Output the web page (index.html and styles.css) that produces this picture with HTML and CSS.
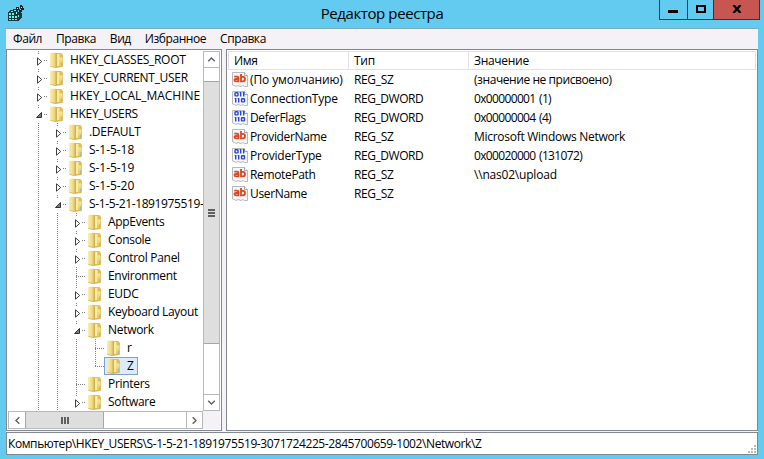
FILE: index.html
```html
<!DOCTYPE html>
<html lang="ru">
<head>
<meta charset="utf-8">
<title>Редактор реестра</title>
<link rel="stylesheet" href="styles.css">
</head>
<body>
<svg class="defs" aria-hidden="true">
  <defs>
    <linearGradient id="gold" x1="0" x2="1" y1="0" y2="0">
      <stop offset="0" stop-color="#faeeb4"/><stop offset=".6" stop-color="#f0da86"/><stop offset="1" stop-color="#dcbc58"/>
    </linearGradient>
    <linearGradient id="gold2" x1="0" x2="0" y1="0" y2="1">
      <stop offset="0" stop-color="#f7e69c"/><stop offset="1" stop-color="#e3c258"/>
    </linearGradient>
    <symbol id="folder" viewBox="0 0 16 16">
      <path d="M6 1h5.500l.5 1 1 1v11.500l-1 .5H6z" fill="#dfbf5c"/>
      <path d="M7 2h2.500v12H7z" fill="#f8eaa8"/>
      <path d="M9 5.500h3.500v9L10 15H9z" fill="url(#gold2)"/>
      <path d="M0 1.500L1 .8h5l.5.700V15L5.500 16 0 14.500z" fill="url(#gold)"/>
      <path d="M6.300 1.500v14" stroke="#cfab45" stroke-width=".8"/>
      <path d="M.3 14.300l5.200 1.300 6.500-1" fill="none" stroke="#d0ac48" stroke-width=".7"/>
      <path d="M11.700 10.500v3" stroke="#6dbbdc" stroke-width=".9"/>
    </symbol>
    <symbol id="page" viewBox="0 0 16 16">
      <path d="M.5 1.500h12l3 3v11h-3l-1.500-1-2 1-3-1-2 1-1.500-1-2-.5z" fill="#f6f6f8" stroke="#b0b0b6" stroke-width=".9"/>
      <path d="M12.500 1.500v3h3" fill="#fff" stroke="#9a9aa2" stroke-width=".9"/>
    </symbol>
    <symbol id="sz" viewBox="0 0 16 16">
      <use href="#page"/>
      <g fill="none" stroke="#d9481f" stroke-width="1.800"><path d="M2.300 5.700h2.700q1.400 0 1.400 1.300V11.300M6.400 8H4Q2.500 8 2.500 9.200T4 10.400h2.400M9 3v7.400h2q2 0 2-2.300T11 5.800H9"/></g>
    </symbol>
    <symbol id="dword" viewBox="0 0 16 16">
      <use href="#page"/>
      <path fill="none" stroke="#2546d8" stroke-width="1.400" d="M3.700 2.700h1.600q.7 0 .7.700v1.800q0 .7-.7.700H3.700Q3 5.900 3 5.200V3.400q0-.7.7-.7zM8.700 2v4.600M11.700 2v4.600M3.700 8v4.600M6.700 8v4.600M10.200 8.700h1.600q.7 0 .7.700v1.800q0 .7-.7.700h-1.600q-.7 0-.7-.7V9.400q0-.7.7-.7z"/>
      <path fill="none" stroke="#2546d8" stroke-width=".8" d="M7.500 2.500h1M10.600 2.500h1M2.600 8.500h1M5.600 8.500h1"/>
    </symbol>
    <symbol id="tri" viewBox="0 0 7 9"><path d="M1.500 .8v7.400L5.700 4.500z" fill="#fff" stroke="#404040"/></symbol>
    <symbol id="open" viewBox="0 0 7 9"><path d="M5.500 1.500v5h-5z" fill="#808080" stroke="#303030"/></symbol>
  </defs>
</svg>
<div class="window">
  <header class="titlebar">
    <svg class="appicon" viewBox="0 0 16 16" shape-rendering="crispEdges">
      <path d="M0 7h1V6h1V5h3V4h3v1h2v2h3v1h1v5h-1v1h-1v1h-1v1H0z" fill="#163a3c"/>
      <path d="M1 8h2v2H1zM4 8h2v2H4zM1 11h2v2H1zM4 11h2v2H4zM1 14h2v1H1zM4 14h2v1H4zM7 11h2v2H7zM7 14h2v1H7zM3 6h2v1H3zM6 5h2v1H6zM10 10h1v2h-1z" fill="#6ff0ea"/>
      <path d="M8 2h3v3H8zM12 0h2v1h1v2h1v2h-2v2h-3V4h1z" fill="#222"/>
      <path d="M9 3h1v1H9zM13 2h1v1h-1zM12 4h1v1h-1zM8 7h1v2H8z" fill="#aef"/>
    </svg>
    <h1>Редактор реестра</h1>
    <div class="controls">
      <button class="min" aria-label="Свернуть"><i></i></button>
      <button class="max" aria-label="Развернуть"><i></i></button>
      <button class="close" aria-label="Закрыть"><svg viewBox="0 0 10 8"><path d="M1.500 0l7 8M8.500 0l-7 8" stroke="#000" stroke-width="2.300"/></svg></button>
    </div>
  </header>
  <div class="client">
    <nav class="menu"><span>Файл</span><span>Правка</span><span>Вид</span><span>Избранное</span><span>Справка</span></nav>
    <div class="panes">
      <section class="treepane">
        <div class="treerow">
          <ul class="tree">
            <li><b class="node"><svg><use href="#tri"/></svg></b><svg class="f"><use href="#folder"/></svg><span>HKEY_CLASSES_ROOT</span></li>
            <li><b class="node"><svg><use href="#tri"/></svg></b><svg class="f"><use href="#folder"/></svg><span>HKEY_CURRENT_USER</span></li>
            <li><b class="node"><svg><use href="#tri"/></svg></b><svg class="f"><use href="#folder"/></svg><span class="loose">HKEY_LOCAL_MACHINE</span></li>
            <li><b class="node"><svg><use href="#open"/></svg></b><svg class="f"><use href="#folder"/></svg><span>HKEY_USERS</span></li>
            <li><b class="line"></b><b class="node"><svg><use href="#tri"/></svg></b><svg class="f"><use href="#folder"/></svg><span>.DEFAULT</span></li>
            <li><b class="line"></b><b class="node"><svg><use href="#tri"/></svg></b><svg class="f"><use href="#folder"/></svg><span class="loose">S-1-5-18</span></li>
            <li><b class="line"></b><b class="node"><svg><use href="#tri"/></svg></b><svg class="f"><use href="#folder"/></svg><span class="loose">S-1-5-19</span></li>
            <li><b class="line"></b><b class="node"><svg><use href="#tri"/></svg></b><svg class="f"><use href="#folder"/></svg><span class="loose">S-1-5-20</span></li>
            <li><b class="line"></b><b class="node"><svg><use href="#open"/></svg></b><svg class="f"><use href="#folder"/></svg><span class="sid">S-1-5-21-1891975519-</span></li>
            <li><b class="line"></b><b class="line"></b><b class="node"><svg><use href="#tri"/></svg></b><svg class="f"><use href="#folder"/></svg><span>AppEvents</span></li>
            <li><b class="line"></b><b class="line"></b><b class="node"><svg><use href="#tri"/></svg></b><svg class="f"><use href="#folder"/></svg><span>Console</span></li>
            <li><b class="line"></b><b class="line"></b><b class="node"><svg><use href="#tri"/></svg></b><svg class="f"><use href="#folder"/></svg><span>Control Panel</span></li>
            <li><b class="line"></b><b class="line"></b><b class="node leaf"></b><svg class="f"><use href="#folder"/></svg><span>Environment</span></li>
            <li><b class="line"></b><b class="line"></b><b class="node"><svg><use href="#tri"/></svg></b><svg class="f"><use href="#folder"/></svg><span>EUDC</span></li>
            <li><b class="line"></b><b class="line"></b><b class="node"><svg><use href="#tri"/></svg></b><svg class="f"><use href="#folder"/></svg><span>Keyboard Layout</span></li>
            <li><b class="line"></b><b class="line"></b><b class="node"><svg><use href="#open"/></svg></b><svg class="f"><use href="#folder"/></svg><span>Network</span></li>
            <li><b class="line"></b><b class="line"></b><b class="line"></b><b class="node leaf"></b><svg class="f"><use href="#folder"/></svg><span>r</span></li>
            <li><b class="line"></b><b class="line"></b><b class="line"></b><b class="node leaf last"></b><em class="selected"><svg class="f"><use href="#folder"/></svg><span>Z</span></em></li>
            <li><b class="line"></b><b class="line"></b><b class="node leaf"></b><svg class="f"><use href="#folder"/></svg><span>Printers</span></li>
            <li><b class="line"></b><b class="line"></b><b class="node"><svg><use href="#tri"/></svg></b><svg class="f"><use href="#folder"/></svg><span>Software</span></li>
          </ul>
          <div class="vscroll">
            <div class="arrow"><svg viewBox="0 0 9 9"><path d="M1.200 6.300l3.300-3.300 3.300 3.300" /></svg></div>
            <div class="vthumb"><i></i><i></i><i></i></div>
            <div class="arrow down"><svg viewBox="0 0 9 9"><path d="M1.200 2.700l3.300 3.300 3.300-3.300" /></svg></div>
          </div>
        </div>
        <div class="hrow">
          <div class="hscroll">
            <div class="arrow"><svg viewBox="0 0 9 9"><path d="M6.300 1.200L3 4.500l3.300 3.300" /></svg></div>
            <div class="hthumb"><i></i><i></i><i></i></div>
            <div class="arrow right"><svg viewBox="0 0 9 9"><path d="M2.700 1.200L6 4.500 2.700 7.800" /></svg></div>
          </div>
        </div>
      </section>
      <section class="list">
        <div class="head"><span>Имя</span><span>Тип</span><span>Значение</span></div>
        <div class="row"><svg><use href="#sz"/></svg><span class="wide">(По умолчанию)</span><span>REG_SZ</span><span class="none">(значение не присвоено)</span></div>
        <div class="row"><svg><use href="#dword"/></svg><span class="mid">ConnectionType</span><span class="dw">REG_DWORD</span><span class="num">0x00000001 (1)</span></div>
        <div class="row"><svg><use href="#dword"/></svg><span>DeferFlags</span><span class="dw">REG_DWORD</span><span class="num">0x00000004 (4)</span></div>
        <div class="row"><svg><use href="#sz"/></svg><span>ProviderName</span><span>REG_SZ</span><span class="text">Microsoft Windows Network</span></div>
        <div class="row"><svg><use href="#dword"/></svg><span class="mid">ProviderType</span><span class="dw">REG_DWORD</span><span class="num">0x00020000 (131072)</span></div>
        <div class="row"><svg><use href="#sz"/></svg><span>RemotePath</span><span>REG_SZ</span><span class="mid">\\nas02\upload</span></div>
        <div class="row"><svg><use href="#sz"/></svg><span>UserName</span><span>REG_SZ</span><span></span></div>
      </section>
    </div>
    <footer class="status"><span>Компьютер\HKEY_USERS\S-1-5-21-1891975519-3071724225-2845700659-1002\Network\Z</span>
      <svg class="grip" viewBox="0 0 8 8"><path d="M6 0h2v2H6zM6 3h2v2H6zM3 3h2v2H3zM0 6h2v2H0zM3 6h2v2H3zM6 6h2v2H6z" fill="#bcbcbc"/></svg>
    </footer>
  </div>
</div>
</body>
</html>
```
FILE: styles.css
```css
* { box-sizing: border-box; }
body {
  margin: 0;
  font: 12px/18px "Open Sans", "Noto Sans", sans-serif;
  letter-spacing: -.3px;
  color: #000;
}
.defs { position: absolute; width: 0; height: 0; }
.window {
  width: 764px;
  height: 459px;
  background: #63cbf0;
  padding: 0 6px 5px;
  display: flex;
  flex-direction: column;
  overflow: hidden;
}
.titlebar { height: 28px; display: flex; align-items: flex-start; flex: none; }
.appicon { width: 16px; height: 16px; margin: 5px 0 0 2px; }
h1 {
  flex: 1;
  margin: 2px 0 0 81px;
  font-size: 15px;
  line-height: 22px;
  font-weight: 400;
  text-align: center;
  letter-spacing: -.4px;
}
.controls { display: flex; height: 20px; width: 101px; margin-right: -2px; border: 1px solid #1d3c47; border-top: 0; }
.controls button { display: flex; align-items: flex-start; height: 19px; border: 0; padding: 0; background: none; border-right: 1px solid #1d3c47; }
.controls .min { width: 28px; padding: 10px 0 0 8px; }
.min i { width: 10px; height: 3px; background: #000; }
.controls .max { width: 26px; padding: 5px 0 0 8px; }
.max i { width: 10px; height: 8px; border: 2px solid #000; }
.controls .close { flex: 1; border-right: 0; background: #c75650; justify-content: center; padding-top: 5px; }
.close svg { width: 10px; height: 8px; }
.client { flex: 1; background: #f5f2f7; border-top: 1px solid #7fa9ba; display: flex; flex-direction: column; }
.menu { height: 20px; display: flex; gap: 13.9px; padding-left: 7px; line-height: 20px; letter-spacing: -.42px; }
.panes { height: 382px; display: flex; gap: 4px; }
.treepane, .list { border: 1px solid #828790; background: #fff; }
.treepane { width: 216px; padding: 1px; }
.treerow { display: flex; height: 360px; }
.tree { flex: 1; list-style: none; margin: 0; padding: 0 0 0 21px; overflow: hidden; white-space: nowrap; }
.tree li { height: 18px; display: flex; }
.tree .f { width: 16px; height: 16px; margin: 1px 0 0 2px; flex: none; }
.tree span { padding-left: 4px; }
.tree .loose { letter-spacing: -.05px; }
.tree .sid { letter-spacing: -.37px; }
b { flex: none; width: 19px; height: 18px; }
.line, .node { background: repeating-linear-gradient(#808080 0 1px, transparent 1px 2px) 9px 0 / 1px 18px no-repeat; }
.node {
  background-image: repeating-linear-gradient(#808080 0 1px, transparent 1px 2px), repeating-linear-gradient(90deg, #808080 0 1px, transparent 1px 2px);
  background-position: 9px 0, 9px 9px;
  background-size: 1px 18px, 10px 1px;
  background-repeat: no-repeat;
}
.node.last { background-size: 1px 10px, 10px 1px; }
.node svg { display: block; width: 9px; height: 13px; margin: 4px 0 0 6px; padding: 2px 1px; background: #fff; }
.selected { display: flex; width: 34px; margin-left: -1px; padding-left: 1px; font-style: normal; background: #dcebfd; box-shadow: inset 0 0 0 1px #7da2ce; }
.vscroll { width: 17px; background: #fff; border: 1px solid #b8b8b8; display: flex; flex-direction: column; }
.arrow { height: 16px; display: flex; align-items: center; justify-content: center; border-bottom: 1px solid #b8b8b8; }
.arrow svg { width: 9px; height: 9px; }
.arrow path { fill: none; stroke: #606060; stroke-width: 1.400; }
.vthumb { margin-top: 13px; height: 263px; background: #dedede; border: 1px solid #a6a6a6; border-width: 1px 0; display: flex; flex-direction: column; gap: 1px; align-items: center; justify-content: center; }
.vthumb i { width: 7px; height: 2px; background: #606060; }
.arrow.down { margin-top: auto; border-top: 1px solid #b8b8b8; border-bottom: 0; }
.hrow { background: #f5f2f7; }
.hscroll { height: 18px; width: 195px; background: #fff; border: 1px solid #b8b8b8; display: flex; }
.hscroll .arrow { width: 16px; border: 0; }
.hthumb { width: 79px; background: #dedede; border: 1px solid #a6a6a6; border-width: 0 1px; display: flex; gap: 1px; align-items: center; justify-content: center; }
.hthumb i { width: 2px; height: 7px; background: #606060; }
.hscroll .right { margin-left: auto; border-left: 1px solid #b8b8b8; }
.list { flex: 1; padding: 1px; }
.head { height: 19px; display: grid; grid-template-columns: 119px 120px 1fr; border: 1px solid #e3e1e4; line-height: 18px; }
.head span { padding-left: 5px; border-left: 1px solid #e3e1e4; }
.head span:first-child { border: 0; }
.row { height: 19px; display: grid; grid-template-columns: 22px 104px 120px 1fr; line-height: 19px; white-space: nowrap; letter-spacing: -.35px; }
.row .wide { letter-spacing: -.1px; }
.row .mid { letter-spacing: -.2px; }
.row .text { letter-spacing: -.28px; }
.row .dw { letter-spacing: -.45px; }
.row .none { letter-spacing: -.43px; }
.row .num { letter-spacing: -.65px; word-spacing: 1px; }
.row svg { width: 16px; height: 16px; margin: 1px 0 0 4px; }
.status { flex: 1; margin-top: 1px; border: 1px solid #828790; background: #fff; display: flex; justify-content: space-between; align-items: flex-end; padding-left: 1px; line-height: 21px; letter-spacing: -.41px; }
.grip { width: 8px; height: 8px; margin: 0 1px 1px 0; }
```
